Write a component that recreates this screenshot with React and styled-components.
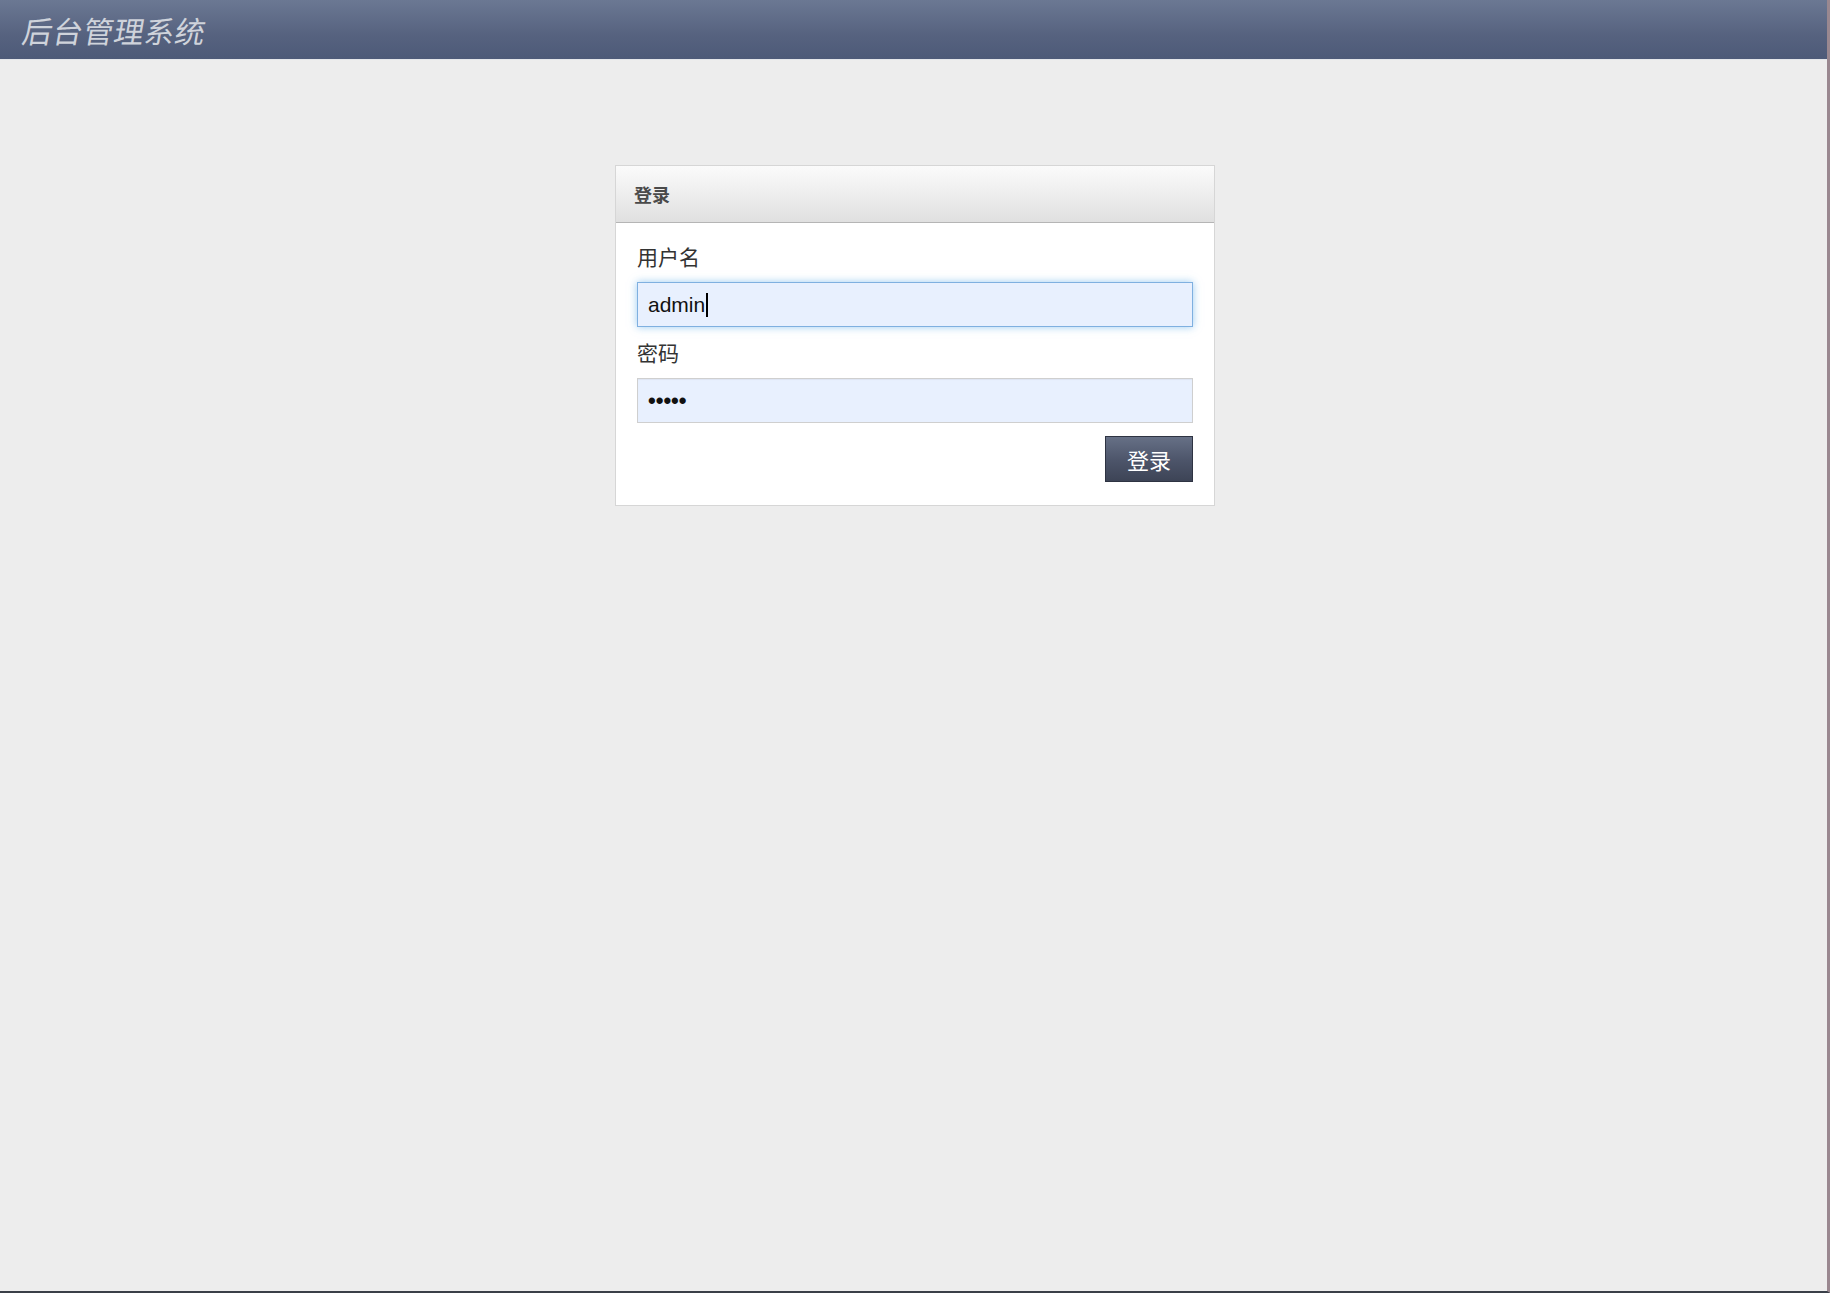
import styled, { createGlobalStyle } from "styled-components";

const GlobalStyle = createGlobalStyle`
  html, body {
    margin: 0;
    padding: 0;
    background: #ededed;
  }
  body {
    font-family: "Liberation Sans", "Noto Sans CJK SC", sans-serif;
    color: #333;
  }
  * {
    box-sizing: border-box;
  }
`;

const Frame = styled.div`
  min-height: 1293px;
  display: flex;
  flex-direction: column;
  border-right: 3px solid #9a8890;
  border-bottom: 2px solid #3a3f48;
  background: #ededed;
`;

const TopBar = styled.header`
  height: 60px;
  display: flex;
  align-items: center;
  padding-left: 23px;
  background: linear-gradient(to bottom, #6b7893 0%, #56627f 60%, #4d5a78 100%);
  border-bottom: 1px solid #e4e6ea;
`;

const Brand = styled.h1`
  margin: 0;
  font-family: "Noto Sans CJK SC", sans-serif;
  font-weight: 400;
  font-size: 30px;
  color: #cfd3db;
  transform: skewX(-10deg);
  letter-spacing: 0.5px;
`;

const Main = styled.main`
  flex: 1;
  padding: 105px 0 0 615px;
`;

const Panel = styled.section`
  width: 600px;
  background: #fff;
  border: 1px solid #d6d6d6;
`;

const PanelHead = styled.div`
  height: 57px;
  display: flex;
  align-items: center;
  padding-left: 18px;
  background: linear-gradient(to bottom, #fbfbfb 0%, #e0e0e0 100%);
  border-bottom: 1px solid #b5b5b5;
  font-family: "Noto Sans CJK SC", sans-serif;
  font-weight: 700;
  font-size: 18px;
  color: #4a4a4a;
`;

const PanelBody = styled.form`
  display: flex;
  flex-direction: column;
  padding: 21px 21px 23px 21px;
`;

const Label = styled.label`
  font-family: "Noto Sans CJK SC", sans-serif;
  font-size: 21px;
  line-height: 24px;
  color: #333;
  margin: ${(p) => (p.$first ? "0" : "13px")} 0 14px 0;
`;

const Field = styled.div`
  height: 45px;
  display: flex;
  align-items: center;
  padding-left: 10px;
  background: #e8f0fe;
  font-family: "Liberation Sans", sans-serif;
  font-size: 21px;
  color: #111;
  border: 1px solid ${(p) => (p.$focused ? "#7fb0e0" : "#cfcfcf")};
  box-shadow: ${(p) =>
    p.$focused
      ? "0 0 8px rgba(102, 175, 233, 0.65)"
      : "inset 0 1px 1px rgba(0, 0, 0, 0.05)"};
`;

const Caret = styled.span`
  display: inline-block;
  width: 2px;
  height: 24px;
  background: #000;
  margin-left: 1px;
`;

const Dots = styled.span`
  font-size: 22px;
  font-weight: 700;
`;

const Actions = styled.div`
  display: flex;
  justify-content: flex-end;
  margin-top: 13px;
`;

const SubmitButton = styled.button`
  width: 88px;
  height: 46px;
  border: 1px solid #2e3342;
  background: linear-gradient(to bottom, #667086 0%, #4c5469 55%, #3d4456 100%);
  color: #fff;
  font-family: "Noto Sans CJK SC", sans-serif;
  font-size: 22px;
  cursor: pointer;
  padding: 0;
`;

export default function App() {
  return (
    <Frame>
      <GlobalStyle />
      <TopBar>
        <Brand>后台管理系统</Brand>
      </TopBar>
      <Main>
        <Panel>
          <PanelHead>登录</PanelHead>
          <PanelBody onSubmit={(e) => e.preventDefault()}>
            <Label $first>用户名</Label>
            <Field $focused>
              admin
              <Caret />
            </Field>
            <Label>密码</Label>
            <Field>
              <Dots>•••••</Dots>
            </Field>
            <Actions>
              <SubmitButton type="submit">登录</SubmitButton>
            </Actions>
          </PanelBody>
        </Panel>
      </Main>
    </Frame>
  );
}
